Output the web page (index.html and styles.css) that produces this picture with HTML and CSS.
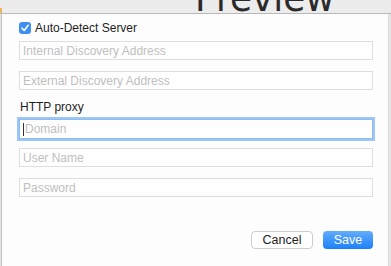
FILE: index.html
```html
<!DOCTYPE html>
<html lang="en">

<head>
    <meta charset="UTF-8">
    <title>Proxy Settings</title>
    <link rel="stylesheet" href="styles.css">
</head>

<body>
    <div class="window-top">
        <span class="accent"></span>
        <span class="big-title">Preview</span>
    </div>

    <div class="sheet">
        <label class="check-row">
            <span class="checkbox">
                <svg width="10" height="10" viewBox="0 0 10 10">
                    <path d="M2 5.2 L4.2 7.5 L8.2 2.3" fill="none" stroke="#fff" stroke-width="1.6" stroke-linecap="round" stroke-linejoin="round"/>
                </svg>
            </span>
            Auto-Detect Server
        </label>

        <div class="field">Internal Discovery Address</div>
        <div class="field">External Discovery Address</div>

        <p class="section-label">HTTP proxy</p>

        <div class="field focused"><span class="caret"></span>Domain</div>
        <div class="field">User Name</div>
        <div class="field">Password</div>

        <div class="actions">
            <button class="btn btn-cancel">Cancel</button>
            <button class="btn btn-save">Save</button>
        </div>
    </div>
</body>

</html>
```
FILE: styles.css
```css
* {
    padding: 0;
    margin: 0;
    box-sizing: border-box;
    font-family: "Liberation Sans", Arial, sans-serif;
}

html,
body {
    height: 100%;
    overflow: hidden;
}

body {
    background: #e4e4e4;
    display: flex;
    flex-direction: column;
}

.window-top {
    height: 14px;
    position: relative;
    background: #ececec;
    border-bottom: 1px solid #b9b9b9;
    overflow: hidden;
    flex-shrink: 0;
}

.accent {
    position: absolute;
    left: 0;
    top: 8px;
    width: 2px;
    height: 6px;
    background: #f2b25c;
}

/* window title behind the sheet, only its lower part shows */
.big-title {
    position: absolute;
    left: 195px;
    bottom: -7px;
    font-size: 39px;
    color: #2a2a2a;
    font-family: "DejaVu Sans", sans-serif;
    transform: scaleX(0.92);
    transform-origin: left bottom;
    white-space: nowrap;
}

.sheet {
    flex: 1;
    margin: 0 2px 0 1px;
    background: #fdfdfd;
    border-left: 1px solid #c4c4c4;
    border-right: 1px solid #dcdcdc;
    padding: 8px 15px 0 17px;
    display: flex;
    flex-direction: column;
}

.check-row {
    display: flex;
    align-items: center;
    gap: 4px;
    font-size: 12px;
    color: #1e1e1e;
    height: 12px;
    margin-bottom: 7px;
}

.checkbox {
    width: 12px;
    height: 12px;
    border-radius: 3px;
    background: #3f8ef3;
    display: flex;
    align-items: center;
    justify-content: center;
}

.field {
    height: 19px;
    border: 1px solid #dedede;
    background: #fefefe;
    font-size: 12px;
    color: #bfbfbf;
    padding-left: 3px;
    margin-bottom: 11px;
    display: flex;
    align-items: center;
}

.section-label {
    font-size: 12px;
    color: #1e1e1e;
    margin: 0 0 6px 1px;
    line-height: 12px;
}

.field.focused {
    height: 20px;
    border-color: #8fbdf2;
    box-shadow: 0 0 0 2px #9bc6f5;
    margin-bottom: 9px;
}

.caret {
    width: 1px;
    height: 13px;
    background: #333;
    margin-right: 1px;
}

.actions {
    margin-top: auto;
    margin-bottom: 17px;
    display: flex;
    justify-content: flex-end;
    gap: 10px;
}

.btn {
    height: 18px;
    border-radius: 4px;
    font-size: 12.5px;
    border: none;
}

.btn-cancel {
    width: 62px;
    background: #ffffff;
    border: 1px solid #cdcdcd;
    color: #222;
}

.btn-save {
    width: 50px;
    background: linear-gradient(#63acfb, #1b80fa);
    color: #ffffff;
}
```
